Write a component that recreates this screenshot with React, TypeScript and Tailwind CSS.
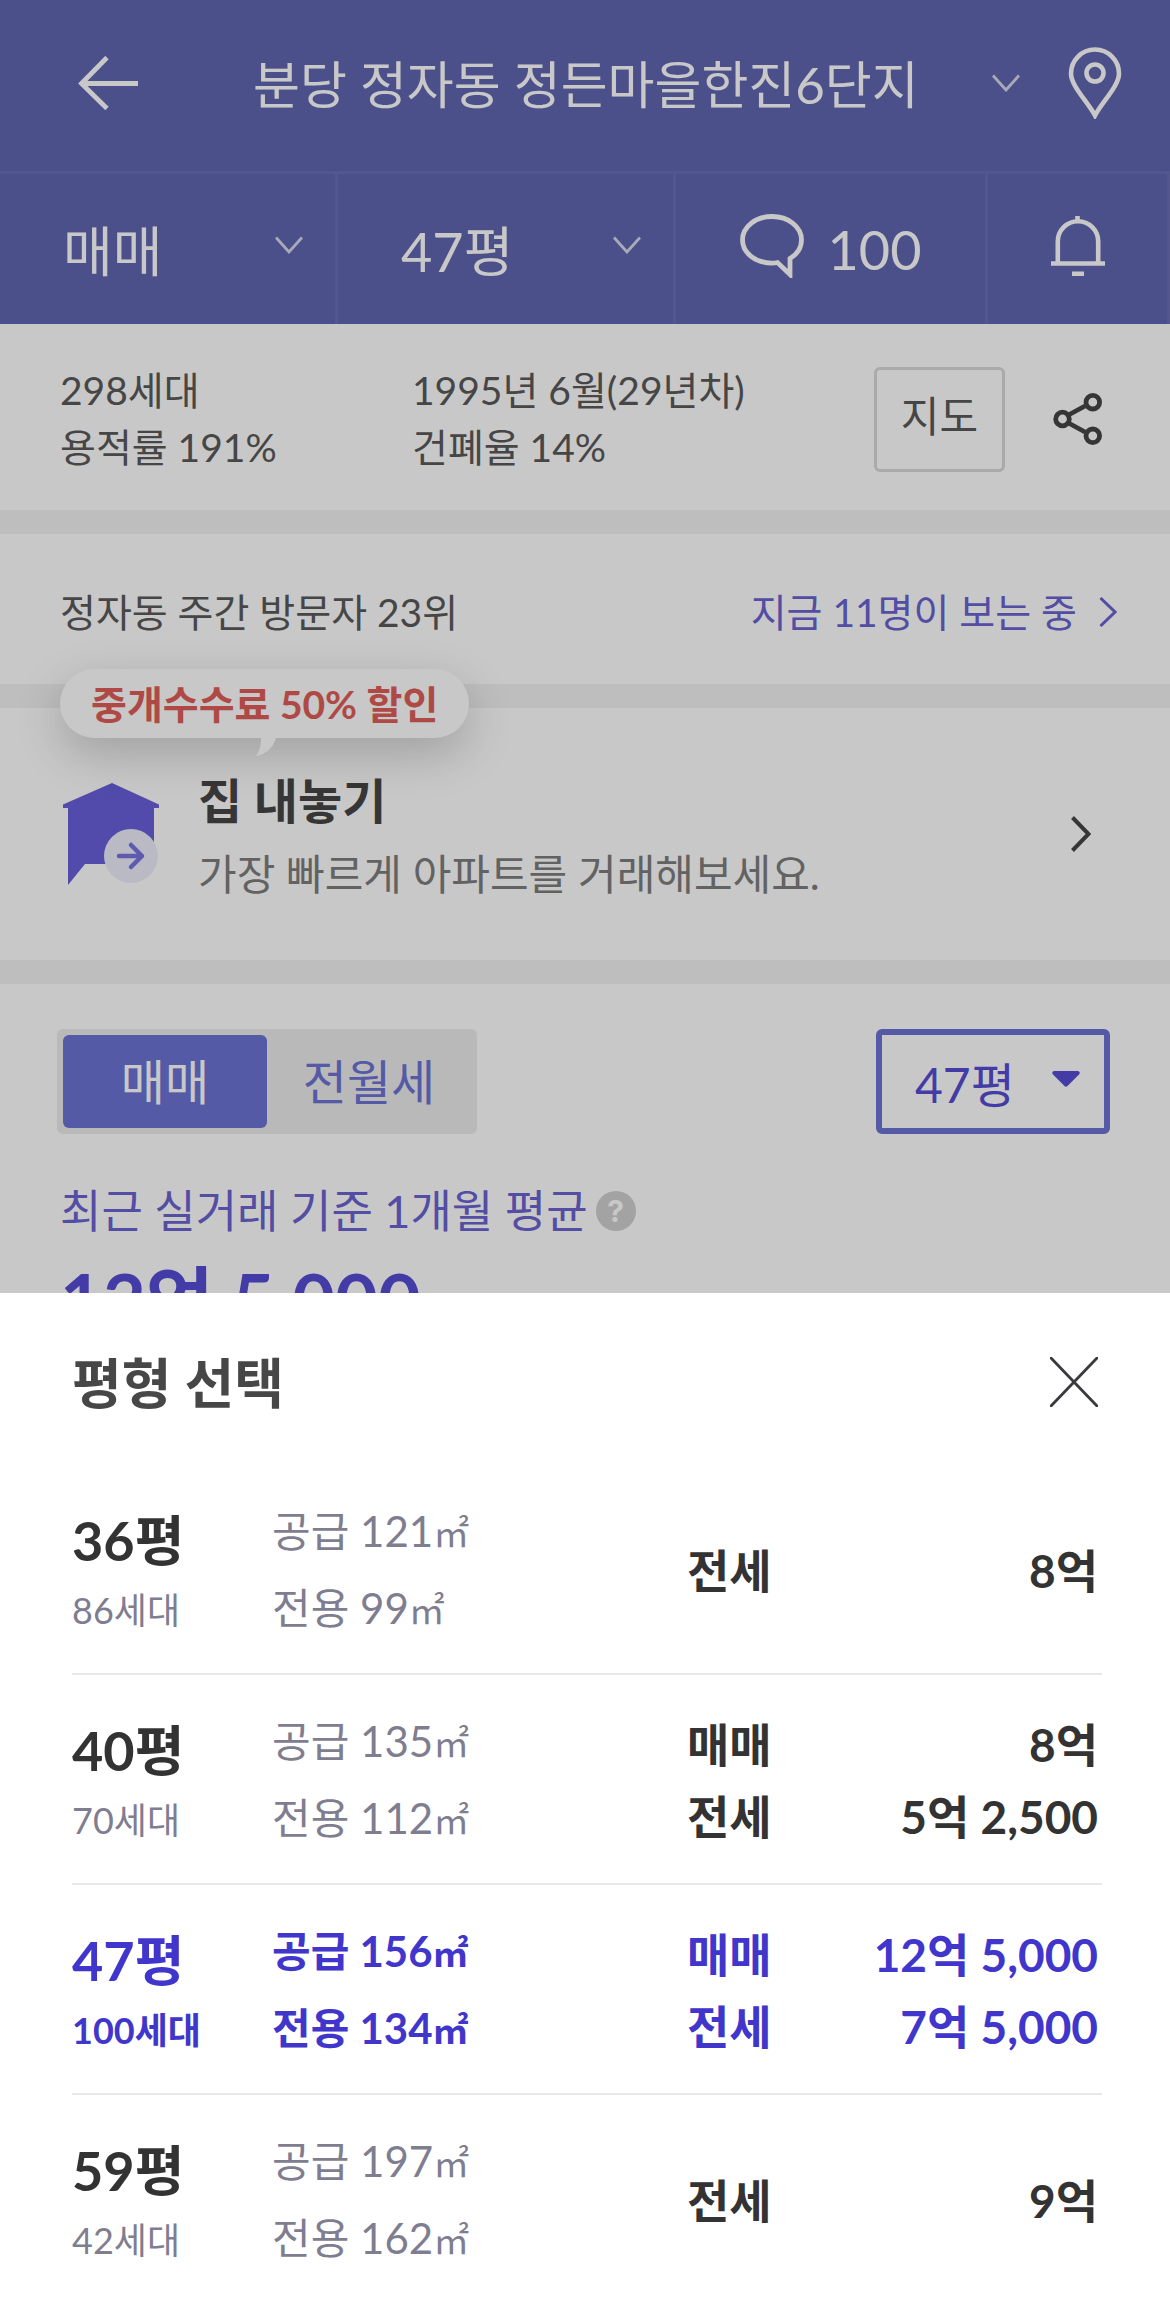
import { useState } from "react";
import clsx from "clsx";

interface Deal {
    type: string;
    price: string;
}

interface SizeOption {
    pyeong: number;
    households: number;
    supply: number;
    exclusive: number;
    deals: Deal[];
}

const sizeOptions: SizeOption[] = [
    { pyeong: 36, households: 86, supply: 121, exclusive: 99, deals: [{ type: "전세", price: "8억" }] },
    {
        pyeong: 40,
        households: 70,
        supply: 135,
        exclusive: 112,
        deals: [
            { type: "매매", price: "8억" },
            { type: "전세", price: "5억 2,500" },
        ],
    },
    {
        pyeong: 47,
        households: 100,
        supply: 156,
        exclusive: 134,
        deals: [
            { type: "매매", price: "12억 5,000" },
            { type: "전세", price: "7억 5,000" },
        ],
    },
    { pyeong: 59, households: 42, supply: 197, exclusive: 162, deals: [{ type: "전세", price: "9억" }] },
];

const ChevronDown = ({ className }: { className?: string }) => (
    <svg className={clsx("h-[18px] w-[28px]", className)} viewBox="0 0 28 18" fill="none" aria-hidden="true">
        <path d="M1 1.5 14 16 27 1.5" stroke="#fff" strokeOpacity="0.75" strokeWidth="2.8" />
    </svg>
);

interface HeaderSelectProps {
    label: string;
    value: string;
    options: string[];
    onChange: (value: string) => void;
}

const HeaderSelect = ({ label, value, options, onChange }: HeaderSelectProps) => (
    <div className="relative flex flex-1 items-center border-r-3 border-[#6b70b6]">
        <select
            aria-label={label}
            value={value}
            onChange={(e) => onChange(e.target.value)}
            className="h-full w-full appearance-none bg-transparent pt-1 pl-[63px] text-[54px] outline-none">
            {options.map((option) => (
                <option key={option}>{option}</option>
            ))}
        </select>
        <ChevronDown className="pointer-events-none absolute right-8 mb-2" />
    </div>
);

interface HeaderProps {
    size: string;
    onChangeSize: (value: string) => void;
}

const Header = ({ size, onChangeSize }: HeaderProps) => {
    const [trade, setTrade] = useState("매매");

    return (
        <header className="bg-[#6267b1] text-white">
            <div className="flex h-[174px] items-center border-b-3 border-[#6b70b6] pr-12 pb-[6px] pl-[78px]">
                <button type="button" aria-label="뒤로">
                    <svg className="h-[54px] w-[60px]" viewBox="0 0 60 54" fill="none" stroke="#fff" strokeWidth="4.8">
                        <path d="M29 1.5 3.5 27.5 29 52.5M3 27.5H60" />
                    </svg>
                </button>
                <button type="button" className="ml-[115px] flex flex-1 items-center justify-between text-[51px] leading-[75px]">
                    <span className="pt-1">분당 정자동 정든마을한진6단지</span>
                    <ChevronDown />
                </button>
                <button type="button" aria-label="위치" className="ml-12">
                    <svg className="h-[72px] w-[54px]" viewBox="0 0 54 72" fill="none" stroke="#fff" strokeWidth="4.6">
                        <path d="M27 68.5C20 55 3 39 3 26.5a24 24 0 0 1 48 0C51 39 34 55 27 68.5Z" />
                        <circle cx="27" cy="26" r="8.5" />
                    </svg>
                </button>
            </div>
            <div className="flex h-[150px]">
                <HeaderSelect label="거래 유형" value={trade} options={["매매", "전월세"]} onChange={setTrade} />
                <HeaderSelect
                    label="평형"
                    value={size}
                    options={sizeOptions.map((option) => `${option.pyeong}평`)}
                    onChange={onChangeSize}
                />
                <button
                    type="button"
                    className="flex w-[312px] items-center justify-center gap-6 border-r-3 border-[#6b70b6] text-[54px]">
                    <svg className="mb-[6px] h-[64px] w-[64px]" viewBox="0 0 64 64" fill="none" stroke="#fff" strokeWidth="4.8">
                        <path d="M50 44.5V60.5L37.5 48.5C35 49 33.5 49.1 32 49.1 15.5 49.1 2.5 39 2.5 25.8 2.5 12.8 15.5 2.5 32 2.5S61.5 12.8 61.5 25.8C61.5 33.5 57 40.3 50 44.5Z" />
                    </svg>
                    100
                </button>
                <button
                    type="button"
                    aria-label="알림"
                    className="flex w-[182px] items-center justify-center border-r-3 border-[#6b70b6]">
                    <svg className="mb-[6px] h-[60px] w-[54px]" viewBox="0 0 54 60" fill="none" stroke="#fff" strokeWidth="4.6">
                        <path d="M0 47.5H54M6.8 47V25.5a20.2 20.2 0 0 1 40.4 0V47M26.5 0V6M21 57.7H33" />
                    </svg>
                </button>
            </div>
        </header>
    );
};

const Summary = () => (
    <section className="flex items-center pt-[38px] pr-[67px] pb-[34px] pl-[60px] text-[39px] leading-[57px] text-[#5a5a5a]">
        <div className="w-[352px]">
            <div>298세대</div>
            <div>용적률 191%</div>
        </div>
        <div className="flex-1">
            <div>1995년 6월(29년차)</div>
            <div>건폐율 14%</div>
        </div>
        <button
            type="button"
            className="h-[105px] w-[131px] rounded-md border-3 border-[#d9d9d9] pb-[6px] text-[42px] leading-[60px]">
            지도
        </button>
        <button type="button" aria-label="공유" className="ml-12">
            <svg className="h-[52px] w-[50px]" viewBox="0 0 50 52" fill="none" stroke="#464646" strokeWidth="4.8">
                <path d="M15.5 22 32 13M15.5 30 32 39" />
                <circle cx="9.5" cy="26" r="6.8" />
                <circle cx="39.8" cy="9.2" r="6.8" />
                <circle cx="39.8" cy="42.8" r="6.8" />
            </svg>
        </button>
    </section>
);

const Visitors = () => (
    <section className="flex h-[150px] items-center justify-between pt-[6px] pr-[53px] pl-[60px] text-[39px] leading-[57px] text-[#5a5a5a]">
        <div>정자동 주간 방문자 23위</div>
        <a href="#visitors" className="flex items-center gap-[22px] text-[#6a63d2]">
            지금 11명이 보는 중
            <svg className="h-[30px] w-[18px]" viewBox="0 0 18 30" fill="none" stroke="currentColor" strokeWidth="3">
                <path d="M1.5 1 16 15 1.5 29" />
            </svg>
        </a>
    </section>
);

const SellBanner = () => (
    <section className="relative h-[252px]">
        <div className="absolute -top-[39px] left-[60px] rounded-full bg-white px-[31px] pt-[7px] pb-[5px] text-[39px] leading-[57px] font-bold text-[#e05e59] shadow-[0_16px_48px_rgba(0,0,0,0.2)]">
            중개수수료 50% 할인
            <svg className="absolute top-full left-[196px] h-[18px] w-[20px]" viewBox="0 0 20 18" aria-hidden="true">
                <path d="M5 0H20C17 10 9 17 0 18 4 12 5 7 5 0Z" fill="#fff" />
            </svg>
        </div>
        <a href="#sell" className="flex h-full items-center pr-[79px] pl-[63px]">
            <svg className="h-[102px] w-[96px]" viewBox="0 0 96 102" aria-hidden="true">
                <path d="M49 0 96 21.5V25H91V81H22L5 102V25H0V21.5Z" fill="#6a60dc" />
                <circle cx="68" cy="73" r="27" fill="#edeefa" />
                <path
                    d="M56 73H79M68 62 79 73 68 84"
                    fill="none"
                    stroke="#7a72e0"
                    strokeWidth="4.5"
                    strokeLinecap="round"
                    strokeLinejoin="round"
                />
            </svg>
            <div className="ml-[39px] flex-1 pt-2">
                <div className="text-[48px] leading-[72px] font-bold text-[#464646]">집 내놓기</div>
                <div className="text-[42px] leading-[75px] text-[#7e7e7e]">가장 빠르게 아파트를 거래해보세요.</div>
            </div>
            <svg className="h-[36px] w-[20px]" viewBox="0 0 20 36" fill="none" stroke="#464646" strokeWidth="4">
                <path d="M1.5 1.5 17.5 18 1.5 34.5" />
            </svg>
        </a>
    </section>
);

const PriceSection = ({ size, onChangeSize }: HeaderProps) => {
    const [tab, setTab] = useState("매매");

    return (
        <section className="px-[60px] pt-[45px]">
            <div className="-ml-[3px] flex items-center justify-between">
                <div className="flex rounded-md bg-[#ececec] p-[6px]">
                    {["매매", "전월세"].map((name) => (
                        <button
                            key={name}
                            type="button"
                            onClick={() => setTab(name)}
                            className={clsx(
                                "h-[93px] w-[204px] rounded-md text-[48px]",
                                tab === name ? "bg-[#6c73d4] text-white" : "text-[#6c73d4]",
                            )}>
                            {name}
                        </button>
                    ))}
                </div>
                <div className="relative">
                    <select
                        aria-label="평형"
                        value={size}
                        onChange={(e) => onChangeSize(e.target.value)}
                        className="h-[105px] w-[234px] appearance-none rounded-md border-6 border-[#6c73d4] bg-transparent pt-[6px] pl-[33px] text-[48px] text-[#564dd4] outline-none">
                        {sizeOptions.map((option) => (
                            <option key={option.pyeong}>{option.pyeong}평</option>
                        ))}
                    </select>
                    <svg
                        className="pointer-events-none absolute top-[42px] right-[30px] h-[16px] w-[28px]"
                        viewBox="0 0 28 16"
                        aria-hidden="true">
                        <path d="M2 0H26Q29 1 27 3.5L15.5 15Q14 16.5 12.5 15L1 3.5Q-1 1 2 0Z" fill="#564dd4" />
                    </svg>
                </div>
            </div>
            <div className="mt-11 flex items-center gap-2 text-[45px] leading-[66px] text-[#6a63d2]">
                최근 실거래 기준 1개월 평균
                <button
                    type="button"
                    aria-label="도움말"
                    className="h-10 w-10 rounded-full bg-[#d0d0d0] font-[Inter,sans-serif] text-[30px] leading-[40px] font-bold text-white">
                    ?
                </button>
            </div>
            <div className="text-[74px] leading-[111px] font-bold text-[#564dd4]">12억 5,000</div>
        </section>
    );
};

interface SizeSheetProps {
    size: string;
    onSelect: (value: string) => void;
    onClose: () => void;
}

const SizeSheet = ({ size, onSelect, onClose }: SizeSheetProps) => (
    <div role="dialog" aria-label="평형 선택" className="fixed inset-x-0 bottom-0 bg-white pr-[68px] pb-2 pl-[72px]">
        <div className="flex h-[172px] items-center justify-between pt-[6px]">
            <h2 className="pt-1 text-[54px] leading-[78px] font-bold text-[#474747]">평형 선택</h2>
            <button type="button" aria-label="닫기" onClick={onClose} className="mr-1">
                <svg className="h-[50px] w-[48px]" viewBox="0 0 48 50" fill="none" stroke="#3a3a3e" strokeWidth="2.8">
                    <path d="M1 1 47 49M47 1 1 49" strokeLinecap="round" />
                </svg>
            </button>
        </div>
        <ul className="divide-y-2 divide-[#e8e8e8]">
            {sizeOptions.map((option) => {
                const selected = size === `${option.pyeong}평`;
                const sub = selected ? "font-bold text-[#4136cc]" : "text-[#7f7d90]";

                return (
                    <li key={option.pyeong}>
                        <button
                            type="button"
                            onClick={() => onSelect(`${option.pyeong}평`)}
                            className={clsx(
                                "flex h-[208px] w-full items-center pr-1 text-left",
                                selected ? "text-[#4136cc]" : "text-[#333]",
                            )}>
                            <div className="w-[200px] pt-1">
                                <div className="text-[54px] leading-[78px] font-bold">{option.pyeong}평</div>
                                <div className={clsx("text-[36px] leading-[60px]", sub)}>{option.households}세대</div>
                            </div>
                            <div className={clsx("flex-1 pt-1 text-[42px] leading-[75px]", sub)}>
                                <div>
                                    공급 {option.supply}
                                    <span className="text-[36px]">㎡</span>
                                </div>
                                <div>
                                    전용 {option.exclusive}
                                    <span className="text-[36px]">㎡</span>
                                </div>
                            </div>
                            <div className="w-[411px] pt-1 text-[46px] leading-[72px] font-bold">
                                {option.deals.map((deal) => (
                                    <div key={deal.type} className="flex justify-between">
                                        <span>{deal.type}</span>
                                        <span>{deal.price}</span>
                                    </div>
                                ))}
                            </div>
                        </button>
                    </li>
                );
            })}
        </ul>
    </div>
);

const App = () => {
    const [size, setSize] = useState("47평");
    const [isOpen, setIsOpen] = useState(true);
    const closeSheet = () => setIsOpen(false);

    return (
        <div className="min-h-screen bg-white font-[Lato,'Noto_Sans_CJK_KR',sans-serif]">
            <Header size={size} onChangeSize={setSize} />
            <Summary />
            <div className="h-6 bg-[#f2f2f2]" />
            <Visitors />
            <div className="h-6 bg-[#f2f2f2]" />
            <SellBanner />
            <div className="h-6 bg-[#f2f2f2]" />
            <PriceSection size={size} onChangeSize={setSize} />
            {isOpen && (
                <>
                    <div className="fixed inset-0 bg-black/[0.216]" onClick={closeSheet} />
                    <SizeSheet size={size} onSelect={setSize} onClose={closeSheet} />
                </>
            )}
        </div>
    );
};

export default App;
